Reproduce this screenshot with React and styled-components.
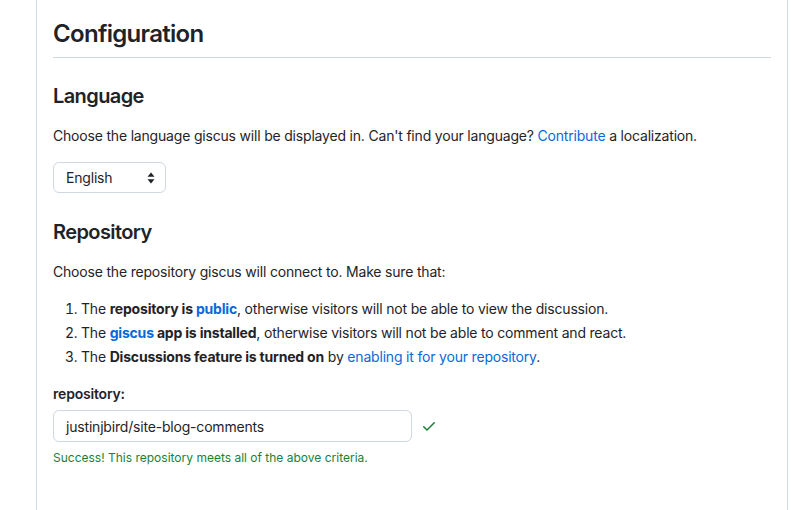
import React from 'react';
import styled, { createGlobalStyle } from 'styled-components';

const GlobalStyle = createGlobalStyle`
  html, body {
    margin: 0;
    padding: 0;
    background: #ffffff;
  }
  body {
    font-family: Inter, "Noto Sans", "Liberation Sans", sans-serif;
    color: #1f2328;
    -webkit-font-smoothing: antialiased;
  }
`;

const Page = styled.div`
  width: 811px;
  height: 510px;
  overflow: hidden;
`;

const Article = styled.article`
  box-sizing: border-box;
  width: 752px;
  min-height: 510px;
  margin-left: 36px;
  padding: 19px 16px 0;
  border-left: 1px solid #d0d7de;
  border-right: 1px solid #d0d7de;
  font-size: 14px;
  line-height: 1.5;
  letter-spacing: -0.19px;
`;

const Title = styled.h2`
  margin: 0;
  padding-bottom: 8px;
  border-bottom: 1px solid #d0d7de;
  font-size: 24px;
  font-weight: 600;
  line-height: 1.25;
  letter-spacing: -0.7px;
`;

const Heading = styled.h3`
  margin: ${({ $gap }) => $gap || '26px'} 0 16px;
  font-size: 20px;
  font-weight: 600;
  line-height: 1.25;
  letter-spacing: -0.6px;
`;

const Text = styled.p`
  margin: 0 0 16px;
`;

const Link = styled.a`
  color: #0969da;
  text-decoration: none;
`;

const Steps = styled.ol`
  margin: 0 0 16px;
  padding-left: 28px;

  li + li {
    margin-top: 3px;
  }
`;

const SelectBox = styled.div`
  box-sizing: border-box;
  display: flex;
  align-items: center;
  justify-content: space-between;
  width: 113px;
  height: 31px;
  padding: 0 10px 0 12px;
  border: 1px solid #d0d7de;
  border-radius: 6px;
  font-size: 14px;
`;

const Label = styled.div`
  font-weight: 600;
  margin-bottom: 6px;
`;

const InputRow = styled.div`
  display: flex;
  align-items: center;
  gap: 9px;
`;

const Input = styled.div`
  box-sizing: border-box;
  display: flex;
  align-items: center;
  width: 359px;
  height: 32px;
  padding: 0 12px;
  border: 1px solid #d0d7de;
  border-radius: 6px;
  font-size: 14px;
`;

const Success = styled.p`
  margin: 7px 0 0;
  font-size: 12px;
  letter-spacing: 0;
  color: #1a7f37;
`;

const SortIcon = () => (
  <svg width="8" height="12" viewBox="0 0 8 12" fill="#1f2328">
    <path d="M4 0.5 L7.5 4.8 H0.5 Z" />
    <path d="M4 11.5 L7.5 7.2 H0.5 Z" />
  </svg>
);

const CheckIcon = () => (
  <svg width="16" height="16" viewBox="0 0 16 16" fill="#1a7f37">
    <path d="M13.78 4.22a.75.75 0 0 1 0 1.06l-7.25 7.25a.75.75 0 0 1-1.06 0L2.22 9.28a.751.751 0 0 1 .018-1.042.751.751 0 0 1 1.042-.018L6 10.94l6.72-6.72a.75.75 0 0 1 1.06 0Z" />
  </svg>
);

export default function App() {
  return (
    <Page>
      <GlobalStyle />
      <Article>
        <Title>Configuration</Title>

        <Heading>Language</Heading>
        <Text>
          Choose the language giscus will be displayed in. Can't find your language?{' '}
          <Link href="#">Contribute</Link> a localization.
        </Text>
        <SelectBox>
          English
          <SortIcon />
        </SelectBox>

        <Heading $gap="27px">Repository</Heading>
        <Text>Choose the repository giscus will connect to. Make sure that:</Text>
        <Steps>
          <li>
            The <strong>repository is <Link href="#">public</Link></strong>, otherwise
            visitors will not be able to view the discussion.
          </li>
          <li>
            The <strong><Link href="#">giscus</Link> app is installed</strong>, otherwise
            visitors will not be able to comment and react.
          </li>
          <li>
            The <strong>Discussions feature is turned on</strong> by{' '}
            <Link href="#">enabling it for your repository</Link>.
          </li>
        </Steps>

        <Label>repository:</Label>
        <InputRow>
          <Input>justinjbird/site-blog-comments</Input>
          <CheckIcon />
        </InputRow>
        <Success>Success! This repository meets all of the above criteria.</Success>
      </Article>
    </Page>
  );
}
